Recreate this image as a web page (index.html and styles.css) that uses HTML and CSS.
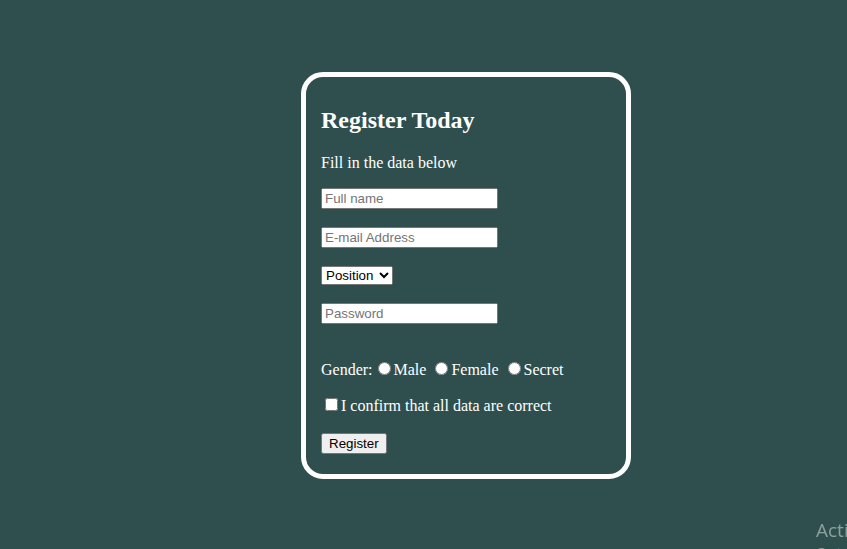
FILE: index.html
```html
<!DOCTYPE html>
<html>
<head>
<meta charset="utf-8">
<title>Register</title>
<link rel="stylesheet" href="styles.css">
</head>
<body>
<div class="card">
  <h2 class="title">Register Today</h2>
  <p class="lead">Fill in the data below</p>
  <form class="form">
    <input class="field" type="text" placeholder="Full name"><br><br>
    <input class="field" type="email" placeholder="E-mail Address"><br><br>
    <select class="pick"><option>Position</option><option>Manager</option><option>Staff</option></select><br><br>
    <input class="field" type="password" placeholder="Password"><br><br><br>
    Gender:<input class="radio" type="radio" name="g">Male <input class="radio" type="radio" name="g">Female <input class="radio" type="radio" name="g">Secret<br><br>
    <input class="check" type="checkbox">I confirm that all data are correct<br><br>
    <button class="btn" type="button">Register</button>
  </form>
</div>
<div class="watermark">
  <div class="wm-1">Activate Windows</div>
  <div class="wm-2">Go to Settings to activate Windows.</div>
</div>
</body>
</html>
```
FILE: styles.css
```css
html, body {
  margin: 0;
  padding: 0;
}
body {
  background: #2f4f4f;
  font-family: "Liberation Serif", "Times New Roman", serif;
  font-size: 16px;
  color: #fff;
  height: 549px;
  overflow: hidden;
}
.card {
  box-sizing: border-box;
  width: 330px;
  height: 407px;
  margin: 72px 0 0 301px;
  border: 5px solid #fff;
  border-radius: 22px;
  padding: 10px 15px 0 15px;
}
.title {
  font-size: 24px;
  margin: 20px 0;
}
.lead {
  margin: 20px 0 16px;
}
.field {
  box-sizing: border-box;
  width: 177px;
  font-family: "Liberation Sans", Arial, sans-serif;
  font-size: 13.33px;
}
.pick {
  box-sizing: border-box;
  width: 72px;
  font-family: "Liberation Sans", Arial, sans-serif;
  font-size: 13.33px;
}
.radio {
  margin-top: 2px;
}
.check {
  margin-top: 1px;
  margin-bottom: 0;
}
.btn {
  font-family: "Liberation Sans", Arial, sans-serif;
  font-size: 13.33px;
  height: 21px;
}
.watermark {
  position: fixed;
  left: 816px;
  top: 517px;
  font-family: "Open Sans", "Noto Sans", sans-serif;
  color: rgba(255,255,255,0.45);
  white-space: nowrap;
}
.wm-1 {
  font-size: 19px;
  line-height: 26px;
}
.wm-2 {
  font-size: 13px;
  line-height: 18px;
}
```
